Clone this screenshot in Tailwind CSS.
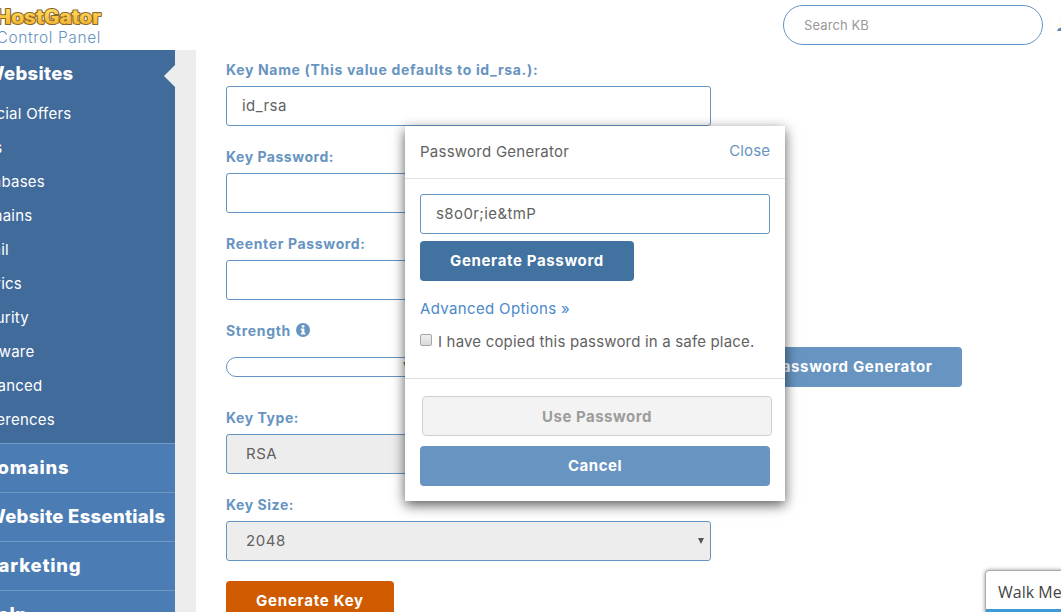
<!DOCTYPE html>
<html lang="en">
<head>
<meta charset="utf-8">
<title>HostGator Control Panel</title>
<script src="https://cdn.jsdelivr.net/npm/@tailwindcss/browser@4"></script>
</head>
<body class="relative flex h-[612px] w-[1061px] flex-col overflow-hidden bg-white font-['Inter','Liberation_Sans',sans-serif] text-[15px] leading-5 tracking-[0.25px] text-[#626262]">
  <header class="flex h-[50px] shrink-0 justify-between">
    <div class="flex w-[101px] flex-col items-end whitespace-nowrap pt-[6px]">
      <svg class="h-[23px] w-[110px] shrink-0 overflow-visible" viewBox="0 0 110 23" aria-label="HostGator">
        <defs><linearGradient id="gold" x1="0" y1="0" x2="0" y2="1"><stop offset="0" stop-color="#ffe477"/><stop offset=".55" stop-color="#fac640"/><stop offset="1" stop-color="#efaa25"/></linearGradient></defs>
        <text x="4" y="18" textLength="106" letter-spacing="0" lengthAdjust="spacingAndGlyphs" font-family="Roboto, sans-serif" font-weight="900" font-size="20.5" fill="url(#gold)" stroke="#8a6526" stroke-width="2" stroke-linejoin="round" paint-order="stroke">HostGator</text>
      </svg>
      <span class="text-[15.5px] leading-[18px] font-light tracking-[0.6px] text-[#6794c1]">Control Panel</span>
    </div>
    <div class="flex pt-[5px]">
      <div class="flex h-10 w-[260px] items-center rounded-full border border-[#6595c3] pl-[20px] text-[13px] tracking-[0.1px] text-[#999]">Search KB</div>
      <svg class="mt-[18px] ml-[13px] h-[9px] w-[5px]" viewBox="0 0 5 9"><path d="M1 8 Q1.5 5 5 4.5V8Z" fill="#5a8abc"/><path d="M4 0L5 0V3H3Z" fill="#fff3b4"/></svg>
    </div>
  </header>

  <div class="flex min-h-0 flex-1">
    <nav class="w-[175px] shrink-0 bg-[#4b7cb4] text-white">
      <div class="h-[393px] bg-[#416b9b]">
        <div class="flex h-[47px] items-center justify-between">
          <span class="flex w-[73.5px] justify-end pb-[2px] text-[18.5px] font-extrabold tracking-[0.3px] whitespace-nowrap">Websites</span>
          <svg class="mt-[4px] h-[22px] w-[11px]" viewBox="0 0 11 22"><path d="M11 0V22L0 11Z" fill="#ededed"/></svg>
        </div>
        <ul class="flex flex-col text-[15px] leading-[34px] whitespace-nowrap">
          <li class="flex w-[71.5px] justify-end">Special Offers</li>
          <li class="flex w-[2.5px] justify-end">Files</li>
          <li class="flex w-[45px] justify-end">Databases</li>
          <li class="flex w-[32.5px] justify-end">Domains</li>
          <li class="flex w-[9px] justify-end">Email</li>
          <li class="flex w-[22px] justify-end">Metrics</li>
          <li class="flex w-[29px] justify-end">Security</li>
          <li class="flex w-[34.5px] justify-end">Software</li>
          <li class="flex w-[42.5px] justify-end">Advanced</li>
          <li class="flex w-[55px] justify-end">Preferences</li>
        </ul>
      </div>
      <div class="text-[18.5px] leading-[46px] font-extrabold whitespace-nowrap">
        <div class="border-t border-[#6e9ac6] pb-[2px]"><div class="flex w-[69.5px] justify-end tracking-[0.8px]">Domains</div></div>
        <div class="border-t border-[#6e9ac6] pb-[2px]"><div class="flex w-[165.5px] justify-end tracking-[0.3px]">Website Essentials</div></div>
        <div class="border-t border-[#6e9ac6] pb-[2px]"><div class="flex w-[81.5px] justify-end tracking-[0.8px]">Marketing</div></div>
        <div class="border-t border-[#6e9ac6] pb-[2px]"><div class="flex w-[27.5px] justify-end tracking-[0.5px]">Help</div></div>
      </div>
    </nav>
    <div class="w-[21px] shrink-0 bg-[#ededed]"></div>

    <main class="flex flex-col gap-[21px] pt-[10px] pl-[30px]">
      <div class="flex flex-col gap-[6px]">
        <label class="text-[14px] font-bold tracking-[0.67px] whitespace-nowrap text-[#6794c1]">Key Name (This value defaults to id_rsa.):</label>
        <div class="flex h-10 w-[485px] items-center rounded-[3px] border border-[#6595c3] px-[15px] tracking-[0.45px]">id_rsa</div>
      </div>
      <div class="flex flex-col gap-[6px]">
        <label class="text-[14px] font-bold tracking-[0.52px] text-[#6794c1]">Key Password:</label>
        <div class="h-10 w-[485px] rounded-[3px] border border-[#6595c3]"></div>
      </div>
      <div class="flex flex-col gap-[6px]">
        <label class="text-[14px] font-bold tracking-[0.65px] text-[#6794c1]">Reenter Password:</label>
        <div class="h-10 w-[485px] rounded-[3px] border border-[#6595c3]"></div>
      </div>
      <div class="flex flex-col gap-[6px]">
        <div class="flex h-5 items-center gap-[4.5px] text-[14px] font-bold tracking-[0.7px] text-[#6794c1]"><span>Strength</span>
          <svg class="mb-[2px] h-[14px] w-[14px]" viewBox="0 0 14 14"><circle cx="7" cy="7" r="7" fill="#6794c1"/><path d="M5.7 2.2H8.4V4.4H5.7ZM4.8 5.5H8.4V9.8H9.4V11.5H4.8V9.8H5.8V7.2H4.8Z" fill="#fff"/></svg>
        </div>
        <div class="flex h-10 items-center">
          <div class="flex h-5 w-[485px] items-center justify-center rounded-full border border-[#6595c3] text-[13.5px] tracking-[0.75px]">Very Weak (0/100)</div>
          <div class="ml-[30px] flex h-10 w-[221px] items-center justify-end rounded-[4px] bg-[#6794c1] pr-[29.5px] font-bold tracking-[0.65px] whitespace-nowrap text-white">Password Generator</div>
        </div>
      </div>
      <div class="flex flex-col gap-[6px]">
        <label class="text-[14px] font-bold tracking-[0.55px] text-[#6794c1]">Key Type:</label>
        <div class="flex h-10 w-[485px] items-center rounded-[3px] border border-[#6595c3] bg-[#ededed] px-[19px] tracking-[0.5px]">RSA</div>
      </div>
      <div class="flex flex-col gap-[6px]">
        <label class="text-[14px] font-bold tracking-[0.55px] text-[#6794c1]">Key Size:</label>
        <div class="flex h-10 w-[485px] items-center justify-between rounded-[3px] border border-[#6595c3] bg-[#ededed] pr-[6px] pl-[19px] tracking-[0.6px]"><span>2048</span>
          <svg class="h-[6px] w-[6px]" viewBox="0 0 6 6"><path d="M0 0H6L3 6Z" fill="#555"/></svg>
        </div>
      </div>
      <div class="-mt-[1px] flex h-10 w-[168px] shrink-0 items-center justify-center rounded-[4px] bg-[#d05a00] font-bold tracking-[0.75px] text-white">Generate Key</div>
    </main>
  </div>

  <section class="absolute top-[126px] left-[405px] flex h-[375px] w-[380px] flex-col bg-white shadow-[0_4px_12px_rgba(0,0,0,0.65)]">
    <div class="flex h-[53px] items-center justify-between border-b border-[#e2e2e2] px-[15px]"><span>Password Generator</span><span class="mb-[3px] tracking-[0.1px] text-[#6794c1]">Close</span></div>
    <div class="flex h-[200px] flex-col items-start border-b border-[#dedede] px-[15px] pt-[15px]">
      <div class="flex h-10 w-full items-center rounded-[3px] border border-[#6595c3] px-[15px] tracking-[0.4px]">s8o0r;ie&amp;tmP</div>
      <div class="mt-[7px] flex h-10 w-[214px] items-center justify-center rounded-[4px] bg-[#42729f] font-bold tracking-[0.65px] text-white">Generate Password</div>
      <a class="mt-[18px] tracking-[0.35px] text-[#4b89ca]">Advanced Options »</a>
      <div class="mt-[13px] flex gap-[6px] tracking-[0.18px] whitespace-nowrap"><span class="mt-[2px] h-3 w-3 rounded-[2px] border border-[#a6a6a6] bg-linear-to-b from-[#eeeeee] to-[#dadada]"></span><span>I have copied this password in a safe place.</span></div>
    </div>
    <div class="flex flex-col gap-[10px] px-[15px] pt-[17px] font-bold tracking-[0.5px]">
      <div class="ml-[2px] flex h-10 w-[350px] items-center justify-center rounded-[4px] border border-[#d0d0d0] bg-[#f3f3f3] pt-[1px] text-[#9c9c9c]">Use Password</div>
      <div class="flex h-10 items-center justify-center rounded-[4px] bg-[#6794c1] text-white">Cancel</div>
    </div>
  </section>

  <aside class="absolute top-[570px] left-[985px] h-[60px] w-[100px] overflow-hidden rounded-[4px] border border-[#aaa] bg-white shadow-[0_0_4px_rgba(0,0,0,0.4)]">
    <div class="h-[38px] pt-[11px] pl-[12px] font-['Open_Sans',sans-serif] text-[16px] tracking-normal whitespace-nowrap text-[#444]">Walk Me Through</div>
    <div class="h-6 bg-[#3b99d6]"></div>
  </aside>
</body>
</html>
